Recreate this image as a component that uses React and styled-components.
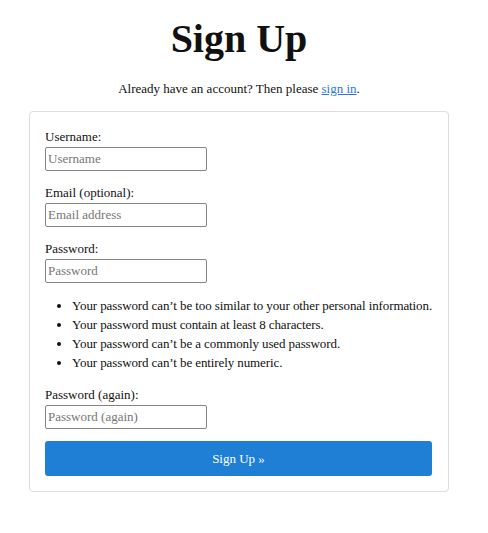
import React from 'react'
import styled, { createGlobalStyle } from 'styled-components'

const colors = {
  text: '#111',
  link: '#2b78e4',
  border: '#dddddd',
  inputBorder: '#858585',
  placeholder: '#767676',
  blue: '#1f7fd5',
  white: '#fff'
}

const GlobalStyle = createGlobalStyle`
  body {
    margin: 0;
    background: ${colors.white};
    color: ${colors.text};
    font-family: "Liberation Serif", "Times New Roman", serif;
    font-size: 13px;
  }
`

const Page = styled.div`
  display: flex;
  flex-direction: column;
  align-items: center;
  padding: 16px 10px 40px 0;
`

const Title = styled.h1`
  margin: 0;
  font-size: 40px;
  line-height: 46px;
  font-weight: bold;
`

const Intro = styled.p`
  margin: 19px 0 0;
  line-height: 15px;
`

const Link = styled.a`
  color: ${colors.link};
  text-decoration: underline;
`

const Card = styled.form`
  box-sizing: border-box;
  width: 420px;
  margin-top: 15px;
  padding: 17px 16px 15px 15px;
  border: 1px solid ${colors.border};
  border-radius: 4px;
  display: flex;
  flex-direction: column;
`

const Field = styled.div`
  display: flex;
  flex-direction: column;
  align-items: flex-start;
  margin-bottom: ${({ gap }) => gap || '14px'};
`

const Label = styled.label`
  line-height: 15px;
  margin-bottom: 3px;
`

const Input = styled.input`
  box-sizing: border-box;
  width: 162px;
  height: 24px;
  padding: 0 2px;
  border: 1px solid ${colors.inputBorder};
  border-radius: 2px;
  font-family: inherit;
  font-size: 13px;
  color: ${colors.text};

  &::placeholder {
    color: ${colors.placeholder};
  }
`

const Rules = styled.ul`
  margin: 13px 0 15px;
  padding-left: 27px;

  li {
    line-height: 19px;
    white-space: nowrap;
    letter-spacing: -0.1px;
  }
`

const Submit = styled.button`
  height: 35px;
  margin-top: 12px;
  border: none;
  border-radius: 3px;
  background: ${colors.blue};
  color: ${colors.white};
  font-family: inherit;
  font-size: 13px;
  cursor: pointer;
`

const rules = [
  'Your password can\u2019t be too similar to your other personal information.',
  'Your password must contain at least 8 characters.',
  'Your password can\u2019t be a commonly used password.',
  'Your password can\u2019t be entirely numeric.'
]

const App = () => (
  <>
    <GlobalStyle />
    <Page>
      <Title>Sign Up</Title>
      <Intro>
        Already have an account? Then please <Link href="#">sign in</Link>.
      </Intro>
      <Card onSubmit={e => e.preventDefault()}>
        <Field>
          <Label>Username:</Label>
          <Input placeholder="Username" />
        </Field>
        <Field>
          <Label>Email (optional):</Label>
          <Input placeholder="Email address" />
        </Field>
        <Field gap="0">
          <Label>Password:</Label>
          <Input type="password" placeholder="Password" />
        </Field>
        <Rules>
          {rules.map(rule => (
            <li key={rule}>{rule}</li>
          ))}
        </Rules>
        <Field gap="0">
          <Label>Password (again):</Label>
          <Input type="password" placeholder="Password (again)" />
        </Field>
        <Submit type="submit">Sign Up &raquo;</Submit>
      </Card>
    </Page>
  </>
)

export default App
